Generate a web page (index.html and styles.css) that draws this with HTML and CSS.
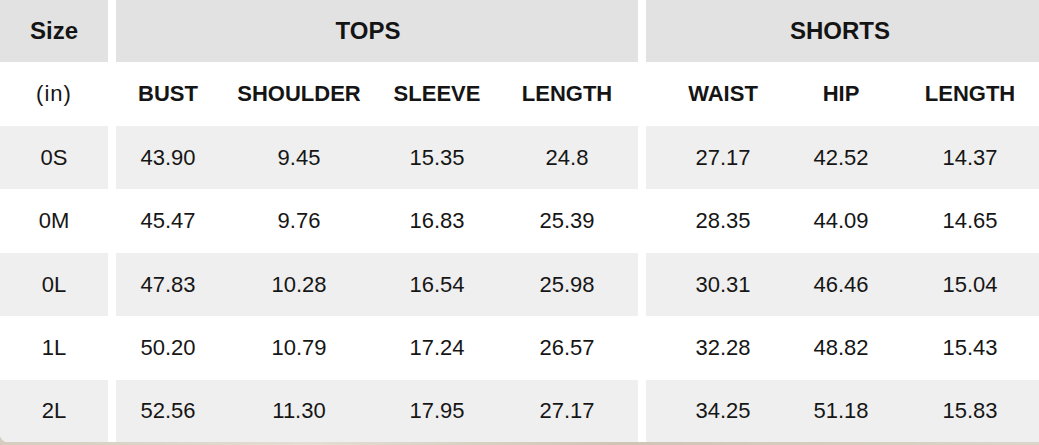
FILE: index.html
```html
<!DOCTYPE html>
<html>
<head>
<meta charset="utf-8">
<link rel="stylesheet" href="styles.css">
</head>
<body>
<div class="table">
  <div class="group size-group">
    <div class="head">Size</div>
    <div class="sub">(in)</div>
    <div class="cell alt">0S</div>
    <div class="cell">0M</div>
    <div class="cell alt">0L</div>
    <div class="cell">1L</div>
    <div class="cell alt">2L</div>
  </div>
  <div class="group tops">
    <div class="head">TOPS</div>
    <div class="row"><div class="sub">BUST</div><div class="sub">SHOULDER</div><div class="sub">SLEEVE</div><div class="sub">LENGTH</div></div>
    <div class="row alt"><div class="cell">43.90</div><div class="cell">9.45</div><div class="cell">15.35</div><div class="cell">24.8</div></div>
    <div class="row"><div class="cell">45.47</div><div class="cell">9.76</div><div class="cell">16.83</div><div class="cell">25.39</div></div>
    <div class="row alt"><div class="cell">47.83</div><div class="cell">10.28</div><div class="cell">16.54</div><div class="cell">25.98</div></div>
    <div class="row"><div class="cell">50.20</div><div class="cell">10.79</div><div class="cell">17.24</div><div class="cell">26.57</div></div>
    <div class="row alt"><div class="cell">52.56</div><div class="cell">11.30</div><div class="cell">17.95</div><div class="cell">27.17</div></div>
  </div>
  <div class="group shorts">
    <div class="head">SHORTS</div>
    <div class="row"><div class="sub">WAIST</div><div class="sub">HIP</div><div class="sub">LENGTH</div></div>
    <div class="row alt"><div class="cell">27.17</div><div class="cell">42.52</div><div class="cell">14.37</div></div>
    <div class="row"><div class="cell">28.35</div><div class="cell">44.09</div><div class="cell">14.65</div></div>
    <div class="row alt"><div class="cell">30.31</div><div class="cell">46.46</div><div class="cell">15.04</div></div>
    <div class="row"><div class="cell">32.28</div><div class="cell">48.82</div><div class="cell">15.43</div></div>
    <div class="row alt"><div class="cell">34.25</div><div class="cell">51.18</div><div class="cell">15.83</div></div>
  </div>
</div>
</body>
</html>
```
FILE: styles.css
```css
html, body {
  margin: 0;
  padding: 0;
  overflow: hidden;
  width: 1039px;
  height: 445px;
  background: linear-gradient(90deg, #d6ccc0, #e4ddd3 30%, #cfc4b6 60%, #ddd5ca);
  font-family: "Liberation Sans", Arial, sans-serif;
  color: #151515;
}

.table {
  display: flex;
  gap: 8px;
  width: 1058px;
  height: 442px;
  background: #fff;
  border-bottom-left-radius: 8px;
  overflow: hidden;
}

.group {
  display: grid;
  grid-template-rows: 62px 64px 63px 64px 63px 64px 62px;
}

.size-group {
  width: 108px;
  grid-template-columns: 108px;
}

.tops {
  width: 522px;
  grid-template-columns: 104px 158px 118px 142px;
}

.shorts {
  width: 412px;
  grid-template-columns: 154px 82px 176px;
}

.row {
  display: contents;
}

.head {
  grid-column: 1 / -1;
  background: #e2e2e2;
  display: flex;
  align-items: center;
  justify-content: center;
  font-weight: bold;
  font-size: 24px;
  color: #141414;
}

.tops .head {
  padding-right: 18px;
}

.shorts .head {
  padding-right: 24px;
}

.sub, .cell {
  display: flex;
  align-items: center;
  justify-content: center;
  font-size: 22px;
  white-space: nowrap;
}

.sub {
  font-weight: bold;
}

.size-group .sub {
  font-weight: normal;
  letter-spacing: 1px;
}

.cell {
  color: #161616;
}

.cell.alt,
.row.alt .cell {
  background: #efefef;
}
```
